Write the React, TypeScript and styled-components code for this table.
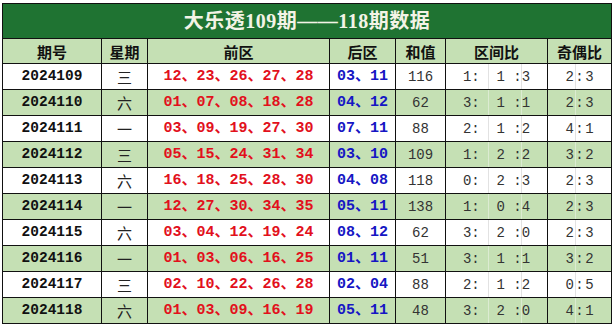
import React from 'react';
import styled, { createGlobalStyle } from 'styled-components';

type Row = {
  period: string;
  day: string;
  front: string;
  back: string;
  sum: string;
  zone: string;
  oddEven: string;
};

const rows: Row[] = [
  { period: '2024109', day: '三', front: '12、23、26、27、28', back: '03、11', sum: '116', zone: '1:  1 :3', oddEven: '2:3' },
  { period: '2024110', day: '六', front: '01、07、08、18、28', back: '04、12', sum: '62', zone: '3:  1 :1', oddEven: '2:3' },
  { period: '2024111', day: '一', front: '03、09、19、27、30', back: '07、11', sum: '88', zone: '2:  1 :2', oddEven: '4:1' },
  { period: '2024112', day: '三', front: '05、15、24、31、34', back: '03、10', sum: '109', zone: '1:  2 :2', oddEven: '3:2' },
  { period: '2024113', day: '六', front: '16、18、25、28、30', back: '04、08', sum: '118', zone: '0:  2 :3', oddEven: '2:3' },
  { period: '2024114', day: '一', front: '12、27、30、34、35', back: '05、11', sum: '138', zone: '1:  0 :4', oddEven: '2:3' },
  { period: '2024115', day: '六', front: '03、04、12、19、24', back: '08、12', sum: '62', zone: '3:  2 :0', oddEven: '2:3' },
  { period: '2024116', day: '一', front: '01、03、06、16、25', back: '01、11', sum: '51', zone: '3:  1 :1', oddEven: '3:2' },
  { period: '2024117', day: '三', front: '02、10、22、26、28', back: '02、04', sum: '88', zone: '2:  1 :2', oddEven: '0:5' },
  { period: '2024118', day: '六', front: '01、03、09、16、19', back: '05、11', sum: '48', zone: '3:  2 :0', oddEven: '4:1' },
];

const GREEN_LIGHT = '#c5e0b4';
const GREEN_DARK = '#1f7332';

const GlobalStyle = createGlobalStyle`
  body {
    margin: 0;
    background: #fff;
  }
`;

const Page = styled.div`
  padding: 3px 0 0 2px;
`;

const Table = styled.table`
  border-collapse: collapse;
  table-layout: fixed;
  width: 610px;
  font-family: "Liberation Mono", "Noto Sans CJK SC", monospace;
  line-height: 1;

  td,
  th {
    border: 1px solid #111;
    padding: 0;
    text-align: center;
    white-space: pre;
  }
`;

const TitleRow = styled.tr`
  height: 35px;
`;

const HeadRow = styled.tr`
  height: 25px;
`;

const TitleCell = styled.th`
  background: ${GREEN_DARK};
  color: #f3f3e6;
  font-family: "Liberation Serif", "Noto Sans CJK SC", serif;
  font-size: 20px;
  font-weight: 600;
  letter-spacing: 0.5px;
`;

const HeadCell = styled.th`
  background: ${GREEN_LIGHT};
  color: #111;
  font-family: "Noto Sans CJK SC", sans-serif;
  font-size: 15px;
  font-weight: 700;
`;

const BodyRow = styled.tr<{ $alt: boolean }>`
  height: 26px;
  background: ${(p) => (p.$alt ? GREEN_LIGHT : '#fff')};
`;

const PeriodCell = styled.td`
  font-size: 14.5px;
  font-weight: 700;
  color: #111;
`;

const DayCell = styled.td`
  font-family: "Noto Sans CJK SC", sans-serif;
  font-size: 15px;
  color: #222;
`;

const BallCell = styled.td<{ $color: string }>`
  font-size: 15px;
  font-weight: 700;
  color: ${(p) => p.$color};
`;

const PlainCell = styled.td`
  font-size: 14px;
  color: #333;
`;

const SplitCell = styled.td<{ $alt: boolean; $lines: number[] }>`
  font-size: 14px;
  color: #333;
  background: ${(p) =>
    p.$lines
      .map(
        (x) =>
          `linear-gradient(${p.$alt ? '#dcebd2' : '#e2e2e2'}, ${p.$alt ? '#dcebd2' : '#e2e2e2'}) ${x}px 0 / 1px 100% no-repeat`,
      )
      .join(', ')};
`;

const OddEven = styled.span`
  letter-spacing: 1.5px;
  margin-left: 1.5px;
`;

const App: React.FC = () => (
  <Page>
    <GlobalStyle />
    <Table>
      <colgroup>
        <col style={{ width: 99 }} />
        <col style={{ width: 46 }} />
        <col style={{ width: 182 }} />
        <col style={{ width: 66 }} />
        <col style={{ width: 50 }} />
        <col style={{ width: 102 }} />
        <col style={{ width: 64 }} />
      </colgroup>
      <thead>
        <TitleRow>
          <TitleCell colSpan={7}>大乐透109期——118期数据</TitleCell>
        </TitleRow>
        <HeadRow>
          <HeadCell>期号</HeadCell>
          <HeadCell>星期</HeadCell>
          <HeadCell>前区</HeadCell>
          <HeadCell>后区</HeadCell>
          <HeadCell>和值</HeadCell>
          <HeadCell>区间比</HeadCell>
          <HeadCell>奇偶比</HeadCell>
        </HeadRow>
      </thead>
      <tbody>
        {rows.map((r, i) => (
          <BodyRow key={r.period} $alt={i % 2 === 1}>
            <PeriodCell>{r.period}</PeriodCell>
            <DayCell>{r.day}</DayCell>
            <BallCell $color="#e2101c">{r.front}</BallCell>
            <BallCell $color="#1616c4">{r.back}</BallCell>
            <PlainCell>{r.sum}</PlainCell>
            <SplitCell $alt={i % 2 === 1} $lines={[42, 75]}>
              {r.zone}
            </SplitCell>
            <SplitCell $alt={i % 2 === 1} $lines={[27]}>
              <OddEven>{r.oddEven}</OddEven>
            </SplitCell>
          </BodyRow>
        ))}
      </tbody>
    </Table>
  </Page>
);

export default App;
